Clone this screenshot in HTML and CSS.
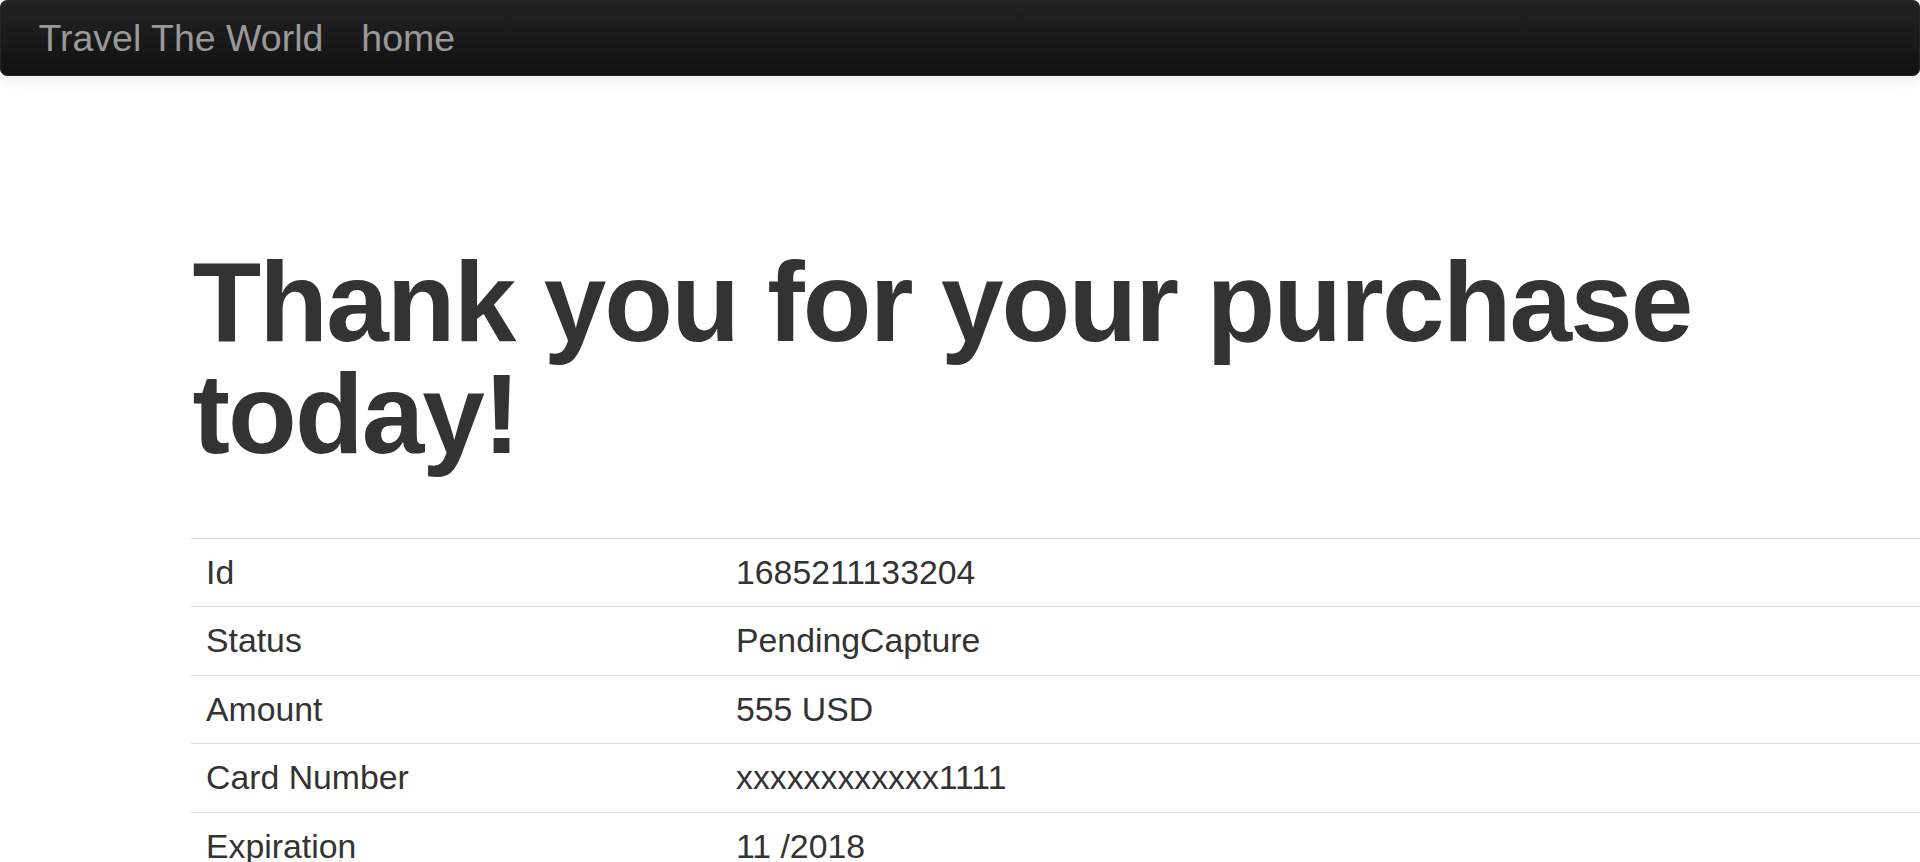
FILE: index.html
```html
<!DOCTYPE html>
<html lang="en">
<head>
<meta charset="utf-8">
<title>Travel The World</title>
<link rel="stylesheet" href="styles.css">
</head>
<body>
<header class="navbar">
  <a class="brand" href="#">Travel The World</a>
  <nav class="nav"><a class="nav-link" href="#">home</a></nav>
</header>
<main class="content">
  <h1 class="title">Thank you for your purchase today!</h1>
  <table class="details">
    <tbody>
      <tr><td class="label">Id</td><td>1685211133204</td></tr>
      <tr><td class="label">Status</td><td>PendingCapture</td></tr>
      <tr><td class="label">Amount</td><td>555 USD</td></tr>
      <tr><td class="label">Card Number</td><td>xxxxxxxxxxxx1111</td></tr>
      <tr><td class="label">Expiration</td><td>11 /2018</td></tr>
    </tbody>
  </table>
</main>
</body>
</html>
```
FILE: styles.css
```css
html, body {
  margin: 0;
  padding: 0;
  background: #fff;
  overflow: hidden;
}
body {
  font-family: "Liberation Sans", Arial, sans-serif;
  color: #333;
}
.navbar {
  display: flex;
  align-items: flex-start;
  height: 76px;
  box-sizing: border-box;
  background: linear-gradient(to bottom, #222222, #111111);
  border: 1px solid #252525;
  border-radius: 7px;
  box-shadow: 0 2px 18px rgba(0, 0, 0, 0.1);
  padding-left: 37.5px;
}
.nav {
  display: flex;
  margin-left: 38px;
}
.brand, .nav-link {
  display: block;
  font-size: 37.5px;
  line-height: 37.5px;
  color: #999;
  text-decoration: none;
  padding-top: 18.5px;
}
.content {
  padding: 170px 0 0 191px;
}
.title {
  margin: 0;
  font-size: 112.5px;
  line-height: 112.3px;
  font-weight: bold;
  letter-spacing: -1.9px;
  padding-left: 1.5px;
}
.details {
  margin-top: 67px;
  width: 100%;
  border-collapse: collapse;
  font-size: 33.8px;
  line-height: 37.6px;
}
.details td {
  border-top: 1px solid #ddd;
  padding: 15px 15px;
  text-align: left;
  vertical-align: top;
}
.details td.label {
  width: 500px;
}
```
